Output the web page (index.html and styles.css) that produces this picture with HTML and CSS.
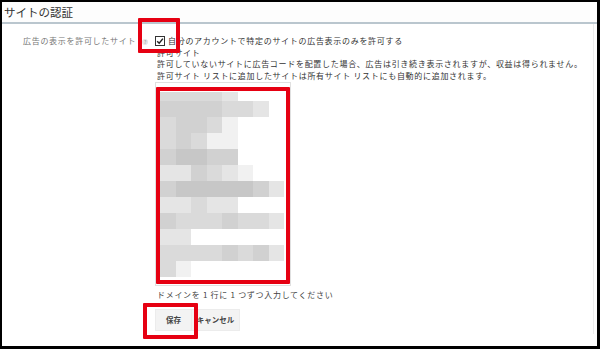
FILE: index.html
```html
<!DOCTYPE html>
<html lang="ja">
<head>
<meta charset="utf-8">
<title>サイトの認証</title>
<link rel="stylesheet" href="styles.css">
</head>
<body>
<div class="frame">
  <div class="header"><h1 class="title">サイトの認証</h1></div>
  <div class="row">
    <div class="label">広告の表示を許可したサイト<span class="help">?</span></div>
    <div class="field">
      <label class="check">
        <svg class="cb" width="10" height="10" viewBox="0 0 10 10"><rect x="0.5" y="0.5" width="9" height="9" fill="#fff" stroke="#333"/><path d="M2.2 5.2 L4.2 7.2 L7.9 2.6" fill="none" stroke="#222" stroke-width="1.5"/></svg>
        <span>自分のアカウントで特定のサイトの広告表示のみを許可する</span>
      </label>
      <div class="line">許可サイト</div>
      <div class="line">許可していないサイトに広告コードを配置した場合、広告は引き続き表示されますが、収益は得られません。</div>
      <div class="line">許可サイト リストに追加したサイトは所有サイト リストにも自動的に追加されます。</div>
      <div class="textarea">
        <div class="mosaic">
          <i class="c"></i><i class="c"></i><i class="c"></i><i class="c"></i><i class="b"></i><i class="w"></i><i class="w"></i><i class="w"></i>
          <i class="d"></i><i class="d"></i><i class="d"></i><i class="d"></i><i class="c"></i><i class="c"></i><i class="b"></i><i class="w"></i>
          <i class="c"></i><i class="d"></i><i class="d"></i><i class="c"></i><i class="a"></i><i class="w"></i><i class="w"></i><i class="w"></i>
          <i class="c"></i><i class="d"></i><i class="c"></i><i class="a"></i><i class="a"></i><i class="w"></i><i class="w"></i><i class="w"></i>
          <i class="d"></i><i class="e"></i><i class="e"></i><i class="d"></i><i class="d"></i><i class="w"></i><i class="w"></i><i class="w"></i>
          <i class="b"></i><i class="b"></i><i class="d"></i><i class="c"></i><i class="b"></i><i class="a"></i><i class="w"></i><i class="w"></i>
          <i class="d"></i><i class="e"></i><i class="e"></i><i class="e"></i><i class="e"></i><i class="e"></i><i class="d"></i><i class="b"></i>
          <i class="b"></i><i class="b"></i><i class="c"></i><i class="b"></i><i class="b"></i><i class="w"></i><i class="w"></i><i class="w"></i>
          <i class="d"></i><i class="c"></i><i class="c"></i><i class="c"></i><i class="d"></i><i class="c"></i><i class="c"></i><i class="b"></i>
          <i class="b"></i><i class="b"></i><i class="w"></i><i class="w"></i><i class="w"></i><i class="w"></i><i class="w"></i><i class="w"></i>
          <i class="c"></i><i class="c"></i><i class="c"></i><i class="c"></i><i class="d"></i><i class="c"></i><i class="d"></i><i class="b"></i>
          <i class="c"></i><i class="a"></i><i class="w"></i><i class="w"></i><i class="w"></i><i class="w"></i><i class="w"></i><i class="w"></i>
        </div>
      </div>
      <div class="hint">ドメインを 1 行に 1 つずつ入力してください</div>
      <div class="buttons">
        <button class="btn">保存</button><button class="btn">キャンセル</button>
      </div>
    </div>
  </div>
  <div class="mark mark-check"></div>
  <div class="mark mark-area"></div>
  <div class="mark mark-save"></div>
</div>
</body>
</html>
```

FILE: styles.css
```css
html, body {
  margin: 0;
  padding: 0;
  background: #fff;
}
body {
  font-family: "Noto Sans CJK JP", "Noto Sans", sans-serif;
  color: #333;
}
.frame {
  position: relative;
  box-sizing: border-box;
  width: 600px;
  height: 349px;
  border-style: solid;
  border-color: #000;
  border-width: 2px 3px 3px 2px;
  background: #fff;
  overflow: hidden;
}
.header {
  height: 20px;
  border-bottom: 2px solid #bac6ce;
  background: #fdfdfd;
}
.title {
  margin: 0;
  padding-left: 2px;
  font-size: 11.5px;
  font-weight: normal;
  line-height: 20px;
  color: #333;
}
.row {
  display: grid;
  grid-template-columns: 153px 1fr;
  padding-top: 11px;
  margin-right: 3px;
  height: 310px;
  box-sizing: border-box;
  border-right: 1px solid #ececec;
}
.label {
  padding-left: 21px;
  font-size: 8px;
  letter-spacing: 0.7px;
  line-height: 11.5px;
  color: #777;
  white-space: nowrap;
}
.help {
  display: inline-block;
  width: 6px;
  height: 6px;
  margin-left: 6px;
  border-radius: 50%;
  background: #e6e6e6;
  color: #999;
  font-size: 5px;
  letter-spacing: 0;
  line-height: 6px;
  text-align: center;
  vertical-align: 0;
}
.field {
  font-size: 8px;
  letter-spacing: 0.7px;
  line-height: 11.5px;
  color: #333;
  white-space: nowrap;
}
.check {
  display: flex;
  align-items: center;
  height: 11.5px;
}
.cb {
  flex: none;
  margin-right: 3px;
}
.line {
  padding-left: 2px;
}
.textarea {
  box-sizing: border-box;
  width: 136px;
  height: 204px;
  margin-top: 1px;
  border: 1px solid #e0e0e0;
  padding: 9px 7px 0 4px;
  background: #fff;
}
.mosaic {
  display: grid;
  grid-template-columns: repeat(8, 15.5px);
  grid-template-rows: 9px repeat(11, 16px);
}
.mosaic i { display: block; }
.mosaic .w { background: #fff; }
.mosaic .a { background: #f1f1f1; }
.mosaic .b { background: #e5e5e5; }
.mosaic .c { background: #dadada; }
.mosaic .d { background: #d1d1d1; }
.mosaic .e { background: #c7c7c7; }
.hint {
  margin-top: 3px;
  padding-left: 2px;
  color: #444;
}
.buttons {
  display: flex;
  margin-top: 8px;
}
.btn {
  box-sizing: border-box;
  height: 22px;
  margin: 0;
  padding: 0;
  border: 1px solid #ececec;
  background: #f3f3f3;
  font-family: "Noto Sans CJK JP", "Noto Sans", sans-serif;
  font-size: 7.5px;
  font-weight: bold;
  letter-spacing: 0;
  color: #444;
}
.btn:first-child { width: 37px; }
.btn:last-child { width: 48px; border-left: none; }
.mark {
  position: absolute;
  box-sizing: border-box;
  border: 4px solid #e60012;
  border-radius: 1px;
}
.mark-check {
  left: 136px;
  top: 16px;
  width: 42px;
  height: 35px;
}
.mark-area {
  left: 154px;
  top: 85px;
  width: 134px;
  height: 197px;
}
.mark-save {
  left: 141px;
  top: 301px;
  width: 55px;
  height: 36px;
}
```
